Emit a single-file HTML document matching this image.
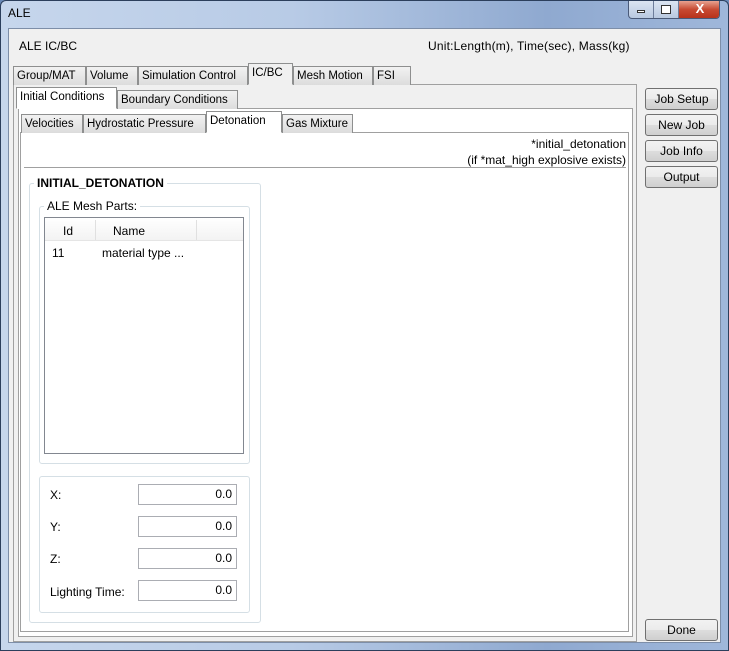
<!DOCTYPE html>
<html><head><style>
*{box-sizing:border-box;margin:0;padding:0}
body{width:729px;height:651px;overflow:hidden;font-family:"Liberation Sans",sans-serif;font-size:12px;color:#000;background:#6a8ab8;position:relative}
.a{position:absolute}
.win{left:0;top:0;width:729px;height:651px;background:linear-gradient(90deg,#c6d6ec 0%,#b8cbe6 40%,#8fa9d0 75%,#9fb7da 100%);border:1px solid #2c3f5c;border-radius:6px 6px 0 0}
.client{left:8px;top:28px;width:713px;height:615px;background:#f0f0f0;border:1px solid #7d8ea8}
.tab{position:absolute;height:19px;border:1px solid #8e8f8f;border-bottom:none;background:linear-gradient(#f2f2f2,#dcdcdc);padding:3px 3px 0;white-space:nowrap;font-size:11.5px;overflow:hidden}
.tab.sel{background:#fff;height:22px;padding-top:3px}
.pane{position:absolute;border:1px solid #8e8f8f;background:#fff}
.btn{position:absolute;left:645px;width:73px;height:22px;border:1px solid #707070;border-radius:3px;background:linear-gradient(#f2f2f2 0%,#ebebeb 50%,#dddddd 51%,#cfcfcf 100%);text-align:center;line-height:20px;font-size:12px}
.grp{position:absolute;border:1px solid #d5dfe5;border-radius:3px}
.inp{position:absolute;left:138px;width:99px;height:21px;border:1px solid #abadb3;background:#fff;text-align:right;padding-right:4px;line-height:19px}
.lbl{position:absolute;left:50px}
</style></head><body>
<div class="a win"></div>
<div class="a" style="left:8px;top:6px;font-size:12px">ALE</div>
<div class="a" style="left:628px;top:1px;width:92px;height:18px;border:1px solid #4a5a78;border-top:none;border-radius:0 0 4px 4px;background:linear-gradient(#dbe5f2,#b9c9e0);overflow:hidden">
 <div class="a" style="left:0;top:0;width:25px;height:17px;border-right:1px solid #6d7d9a"><div class="a" style="left:8px;top:9px;width:8px;height:3px;background:#fff;border:1px solid #333"></div></div>
 <div class="a" style="left:25px;top:0;width:25px;height:17px;border-right:1px solid #6d7d9a"><div class="a" style="left:7px;top:4px;width:10px;height:9px;border:1px solid #333;background:#fff"></div></div>
 <div class="a" style="left:50px;top:0;width:42px;height:17px;background:linear-gradient(#e8a290,#c74a32 50%,#b8321a);color:#fff;font-weight:bold;text-align:center;line-height:16px;font-size:13px">X</div>
</div>
<div class="a client"></div>
<div class="a" style="left:19px;top:39px">ALE IC/BC</div>
<div class="a" style="left:428px;top:39px;letter-spacing:0.2px">Unit:Length(m), Time(sec), Mass(kg)</div>

<div class="pane" style="left:13px;top:84px;width:624px;height:558px;background:#f0f0f0;border-color:#a0a0a0"></div>
<div class="tab" style="left:13px;top:66px;width:73px">Group/MAT</div>
<div class="tab" style="left:86px;top:66px;width:52px">Volume</div>
<div class="tab" style="left:138px;top:66px;width:110px">Simulation Control</div>
<div class="tab sel" style="left:248px;top:63px;width:45px;border-bottom:1px solid #f0f0f0;background:#f0f0f0;height:22px">IC/BC</div>
<div class="tab" style="left:293px;top:66px;width:80px">Mesh Motion</div>
<div class="tab" style="left:373px;top:66px;width:38px">FSI</div>

<div class="pane" style="left:18px;top:108px;width:615px;height:529px;background:#fff;border-color:#a0a0a0"></div>
<div class="tab sel" style="left:16px;top:87px;width:101px;height:22px;background:#fff;border-bottom:1px solid #fff">Initial Conditions</div>
<div class="tab" style="left:117px;top:90px;width:121px">Boundary Conditions</div>

<div class="pane" style="left:20px;top:132px;width:609px;height:500px;background:#fff;border-color:#a0a0a0"></div>
<div class="tab" style="left:21px;top:114px;width:62px">Velocities</div>
<div class="tab" style="left:83px;top:114px;width:123px">Hydrostatic Pressure</div>
<div class="tab sel" style="left:206px;top:111px;width:76px;height:22px;border-bottom:1px solid #fff">Detonation</div>
<div class="tab" style="left:282px;top:114px;width:71px">Gas Mixture</div>

<div class="a" style="right:103px;top:136px;text-align:right;line-height:16px">*initial_detonation<br>(if *mat_high explosive exists)</div>
<div class="a" style="left:24px;top:167px;width:602px;height:1px;background:#a0a0a0"></div>

<div class="grp" style="left:29px;top:183px;width:232px;height:440px"></div>
<div class="a" style="left:34px;top:176px;padding:0 3px;background:#fff;font-weight:bold">INITIAL_DETONATION</div>
<div class="grp" style="left:39px;top:206px;width:211px;height:258px"></div>
<div class="a" style="left:44px;top:199px;padding:0 3px;background:#fff">ALE Mesh Parts:</div>
<div class="a" style="left:44px;top:217px;width:200px;height:237px;border:1px solid #828790;background:#fff"></div>
<div class="a" style="left:45px;top:218px;width:198px;height:23px;background:linear-gradient(#fff,#f3f3f3);border-bottom:1px solid #e5e5e5"></div>
<div class="a" style="left:95px;top:220px;width:1px;height:20px;background:#e0e0e0"></div>
<div class="a" style="left:196px;top:220px;width:1px;height:20px;background:#e0e0e0"></div>
<div class="a" style="left:63px;top:224px">Id</div>
<div class="a" style="left:113px;top:224px">Name</div>
<div class="a" style="left:52px;top:246px">11</div>
<div class="a" style="left:102px;top:246px">material type ...</div>

<div class="grp" style="left:39px;top:476px;width:211px;height:137px"></div>
<div class="lbl" style="top:488px">X:</div><div class="inp" style="top:484px">0.0</div>
<div class="lbl" style="top:520px">Y:</div><div class="inp" style="top:516px">0.0</div>
<div class="lbl" style="top:552px">Z:</div><div class="inp" style="top:548px">0.0</div>
<div class="lbl" style="top:585px">Lighting Time:</div><div class="inp" style="top:580px">0.0</div>

<div class="btn" style="top:88px">Job Setup</div>
<div class="btn" style="top:114px">New Job</div>
<div class="btn" style="top:140px">Job Info</div>
<div class="btn" style="top:166px">Output</div>
<div class="btn" style="top:619px">Done</div>
</body></html>
